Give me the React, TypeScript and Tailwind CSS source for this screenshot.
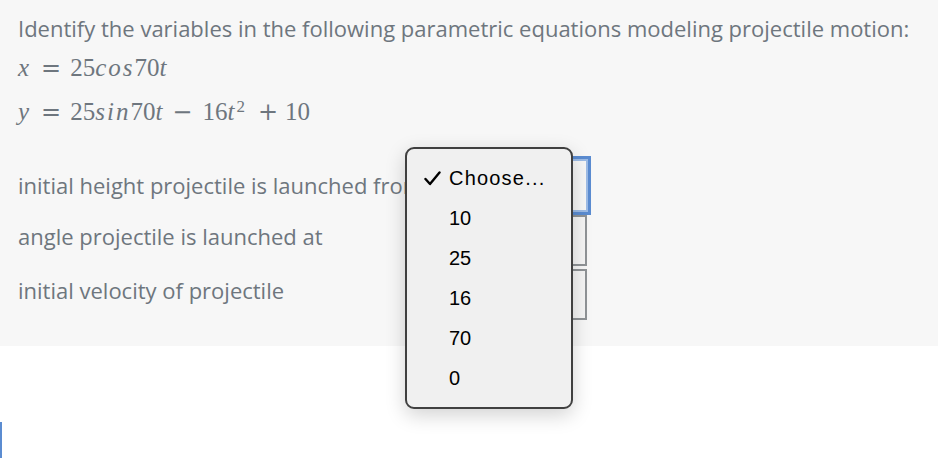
import { Fragment } from 'react'

const rows = [
  { label: 'initial height projectile is launched from', focused: true, pad: 'pb-[0px]' },
  { label: 'angle projectile is launched at', focused: false, pad: 'pb-[9px]' },
  { label: 'initial velocity of projectile', focused: false, pad: 'pb-[9px]' },
]

const options = ['10', '25', '16', '70', '0']

function Select({ focused }: { focused: boolean }) {
  if (focused) {
    return (
      <div className="w-[148px] h-[53px] bg-[#f7f7f7] border-2 border-[#9dbce6] outline-[3px] outline-solid outline-[#5b8cd1]" />
    )
  }
  return <div className="w-[147px] h-[51px] bg-[#f5f5f5] border-2 border-[#8f9396]" />
}

// math identifiers are spaced out a little, like MathJax does
function Mi({ children }: { children: string }) {
  return <i className="tracking-[2px]">{children}</i>
}

function Mo({ children, className }: { children: string; className: string }) {
  return <span className={`font-['DejaVu_Serif',serif] text-[24px] ${className}`}>{children}</span>
}

export default function App() {
  return (
    <div className="relative w-[938px] h-[458px] overflow-hidden bg-white">
      <div className="h-[346px] bg-[#f7f7f7] pl-[18px] pt-[11px] text-[#6e767e]">
        <p className="font-['Open_Sans',sans-serif] text-[22px] leading-[34px] whitespace-nowrap">
          Identify the variables in the following parametric equations modeling projectile motion:
        </p>

        <div className="mt-[1px] font-['Liberation_Serif',serif] text-[25px] leading-[44px]">
          <div className="flex items-baseline">
            <Mi>x</Mi>
            <Mo className="ml-[10px] mr-[9px]">=</Mo>
            <span>25</span>
            <Mi>cos</Mi>
            <span>70</span>
            <Mi>t</Mi>
          </div>
          <div className="flex items-baseline">
            <Mi>y</Mi>
            <Mo className="ml-[10px] mr-[9px]">=</Mo>
            <span>25</span>
            <Mi>sin</Mi>
            <span>70</span>
            <Mi>t</Mi>
            <Mo className="ml-[8px] mr-[10px]">&minus;</Mo>
            <span>16</span>
            <i>t</i>
            <sup className="text-[17px] ml-[2px]">2</sup>
            <Mo className="ml-[13px] mr-[7px]">+</Mo>
            <span>10</span>
          </div>
        </div>

        <div className="mt-[25px] flex flex-col gap-[3px] font-['Open_Sans',sans-serif] text-[22px]">
          {rows.map((r) => (
            <div key={r.label} className="flex items-center">
              <span className={`w-[422px] ${r.pad} whitespace-nowrap overflow-hidden`}>{r.label}</span>
              <Select focused={r.focused} />
            </div>
          ))}
        </div>
      </div>

      <div className="mt-[76px] w-[2px] h-[40px] bg-[#5b8cd1]" />

      {/* native select popup */}
      <div className="absolute left-[405px] top-[147px] w-[168px] h-[262px] rounded-[9px] border-2 border-[#404040] bg-[#f0f0f0] shadow-[0_6px_20px_rgba(0,0,0,0.18)] pt-[9px] font-['Liberation_Sans',Arial,sans-serif] text-[20px] text-black">
        <div className="flex items-center h-[40px]">
          <svg className="ml-[17px] w-[17px] h-[15px]" viewBox="0 0 17 15" fill="none">
            <path d="M1.5 8 L6 13 L15.5 1.5" stroke="black" strokeWidth="2.4" strokeLinecap="round" strokeLinejoin="round" />
          </svg>
          <span className="ml-[8px] tracking-[1.2px]">Choose...</span>
        </div>
        {options.map((o) => (
          <Fragment key={o}>
            <div className="flex items-center h-[40px] pl-[42px]">{o}</div>
          </Fragment>
        ))}
      </div>
    </div>
  )
}
